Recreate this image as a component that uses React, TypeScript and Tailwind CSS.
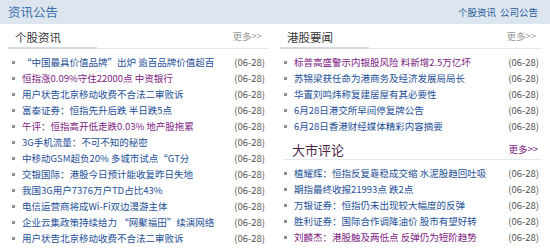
import React from "react";

type Item = { t: string; v?: boolean };

const leftItems: Item[] = [
  { t: "“中国最具价值品牌”出炉 逾百品牌价值超百" },
  { t: "恒指涨0.09%守住22000点 中资银行", v: true },
  { t: "用户状告北京移动收费不合法二审败诉" },
  { t: "富泰证券：恒指先升后跌 半日跌5点" },
  { t: "午评：恒指高开低走跌0.03% 地产股拖累", v: true },
  { t: "3G手机流量：不可不知的秘密" },
  { t: "中移动GSM超负20% 多城市试点“GT分" },
  { t: "交银国际：港股今日预计能收复昨日失地" },
  { t: "我国3G用户7376万户TD占比43%" },
  { t: "电信运营商将成Wi-Fi双边漫游主体" },
  { t: "企业云集政策持续给力 “网聚福田”续演网络" },
  { t: "用户状告北京移动收费不合法二审败诉" },
];

const rightItems1: Item[] = [
  { t: "标普高盛警示内银股风险 料新增2.5万亿坏", v: true },
  { t: "苏锦梁获任命为港商务及经济发展局局长" },
  { t: "华置刘鸣炜称复建居屋有其必要性" },
  { t: "6月28日港交所早间停复牌公告" },
  { t: "6月28日香港财经媒体精彩内容摘要" },
];

const rightItems2: Item[] = [
  { t: "植耀辉：恒指反复靠稳成交缩 水泥股趋回吐吸" },
  { t: "期指最终收报21993点 跌2点" },
  { t: "万银证券：恒指仍未出现较大幅度的反弹" },
  { t: "胜利证券：国际合作调降油价 股市有望好转" },
  { t: "刘麟杰：港股触及两低点 反弹仍为短阶趋势", v: true },
];

const font = { fontFamily: '"Noto Sans CJK SC", "Liberation Sans", sans-serif' };

function List({ items }: { items: Item[] }) {
  return (
    <ul className="flex flex-col">
      {items.map((it, i) => (
        <li key={i} className="flex h-[16px] items-center text-[9.5px] leading-[16px]">
          <span className="ml-[4px] mr-[7px] h-[3px] w-[3px] bg-[#8a8f96]" />
          <span className={`flex-1 whitespace-nowrap ${it.v ? "text-[#7e2383]" : "text-[#244f97]"}`}>{it.t}</span>
          <span className="mr-[3px] text-[#555]">(06-28)</span>
        </li>
      ))}
    </ul>
  );
}

function Header({ title }: { title: string }) {
  return (
    <div className="flex h-[25px] items-end justify-between border-b border-[#e4e7eb] pt-[4px]">
      <div className="-mb-px flex h-[22px] w-[89px] items-center border-b-2 border-[#d5dbe2] pl-[7px] text-[11.5px] leading-[20px] text-[#333]">
        {title}
      </div>
      <span className="mb-[5px] mr-[6px] text-[9.5px] leading-[14px] text-[#9a9a9a]">更多&gt;&gt;</span>
    </div>
  );
}

export default function App() {
  return (
    <div className="h-[250px] w-[550px] overflow-hidden bg-white" style={font}>
      <div className="flex h-[24px] items-center justify-between bg-[#dde6ef] px-[8px]">
        <span className="text-[12.5px] text-[#3a70ab]">资讯公告</span>
        <span className="mr-[4px] flex gap-[4px] text-[9.5px] text-[#24589c]">
          <span>个股资讯</span>
          <span>公司公告</span>
        </span>
      </div>
      <div className="flex">
        <div className="ml-[8px] w-[260px]">
          <Header title="个股资讯" />
          <div className="mt-[5px]">
            <List items={leftItems} />
          </div>
        </div>
        <div className="ml-[12px] w-[262px]">
          <Header title="港股要闻" />
          <div className="mt-[5px]">
            <List items={rightItems1} />
          </div>
          <div className="ml-[4px] flex h-[26px] items-end justify-between border-b border-[#e4e7eb]">
            <span className="mb-[0px] pl-[8px] text-[13px] leading-[18px] text-[#4d2449]">大市评论</span>
            <span className="mb-[3px] mr-[4px] text-[9.5px] leading-[14px] text-[#7e2383]">更多&gt;&gt;</span>
          </div>
          <div className="mt-[5px]">
            <List items={rightItems2} />
          </div>
        </div>
      </div>
    </div>
  );
}
